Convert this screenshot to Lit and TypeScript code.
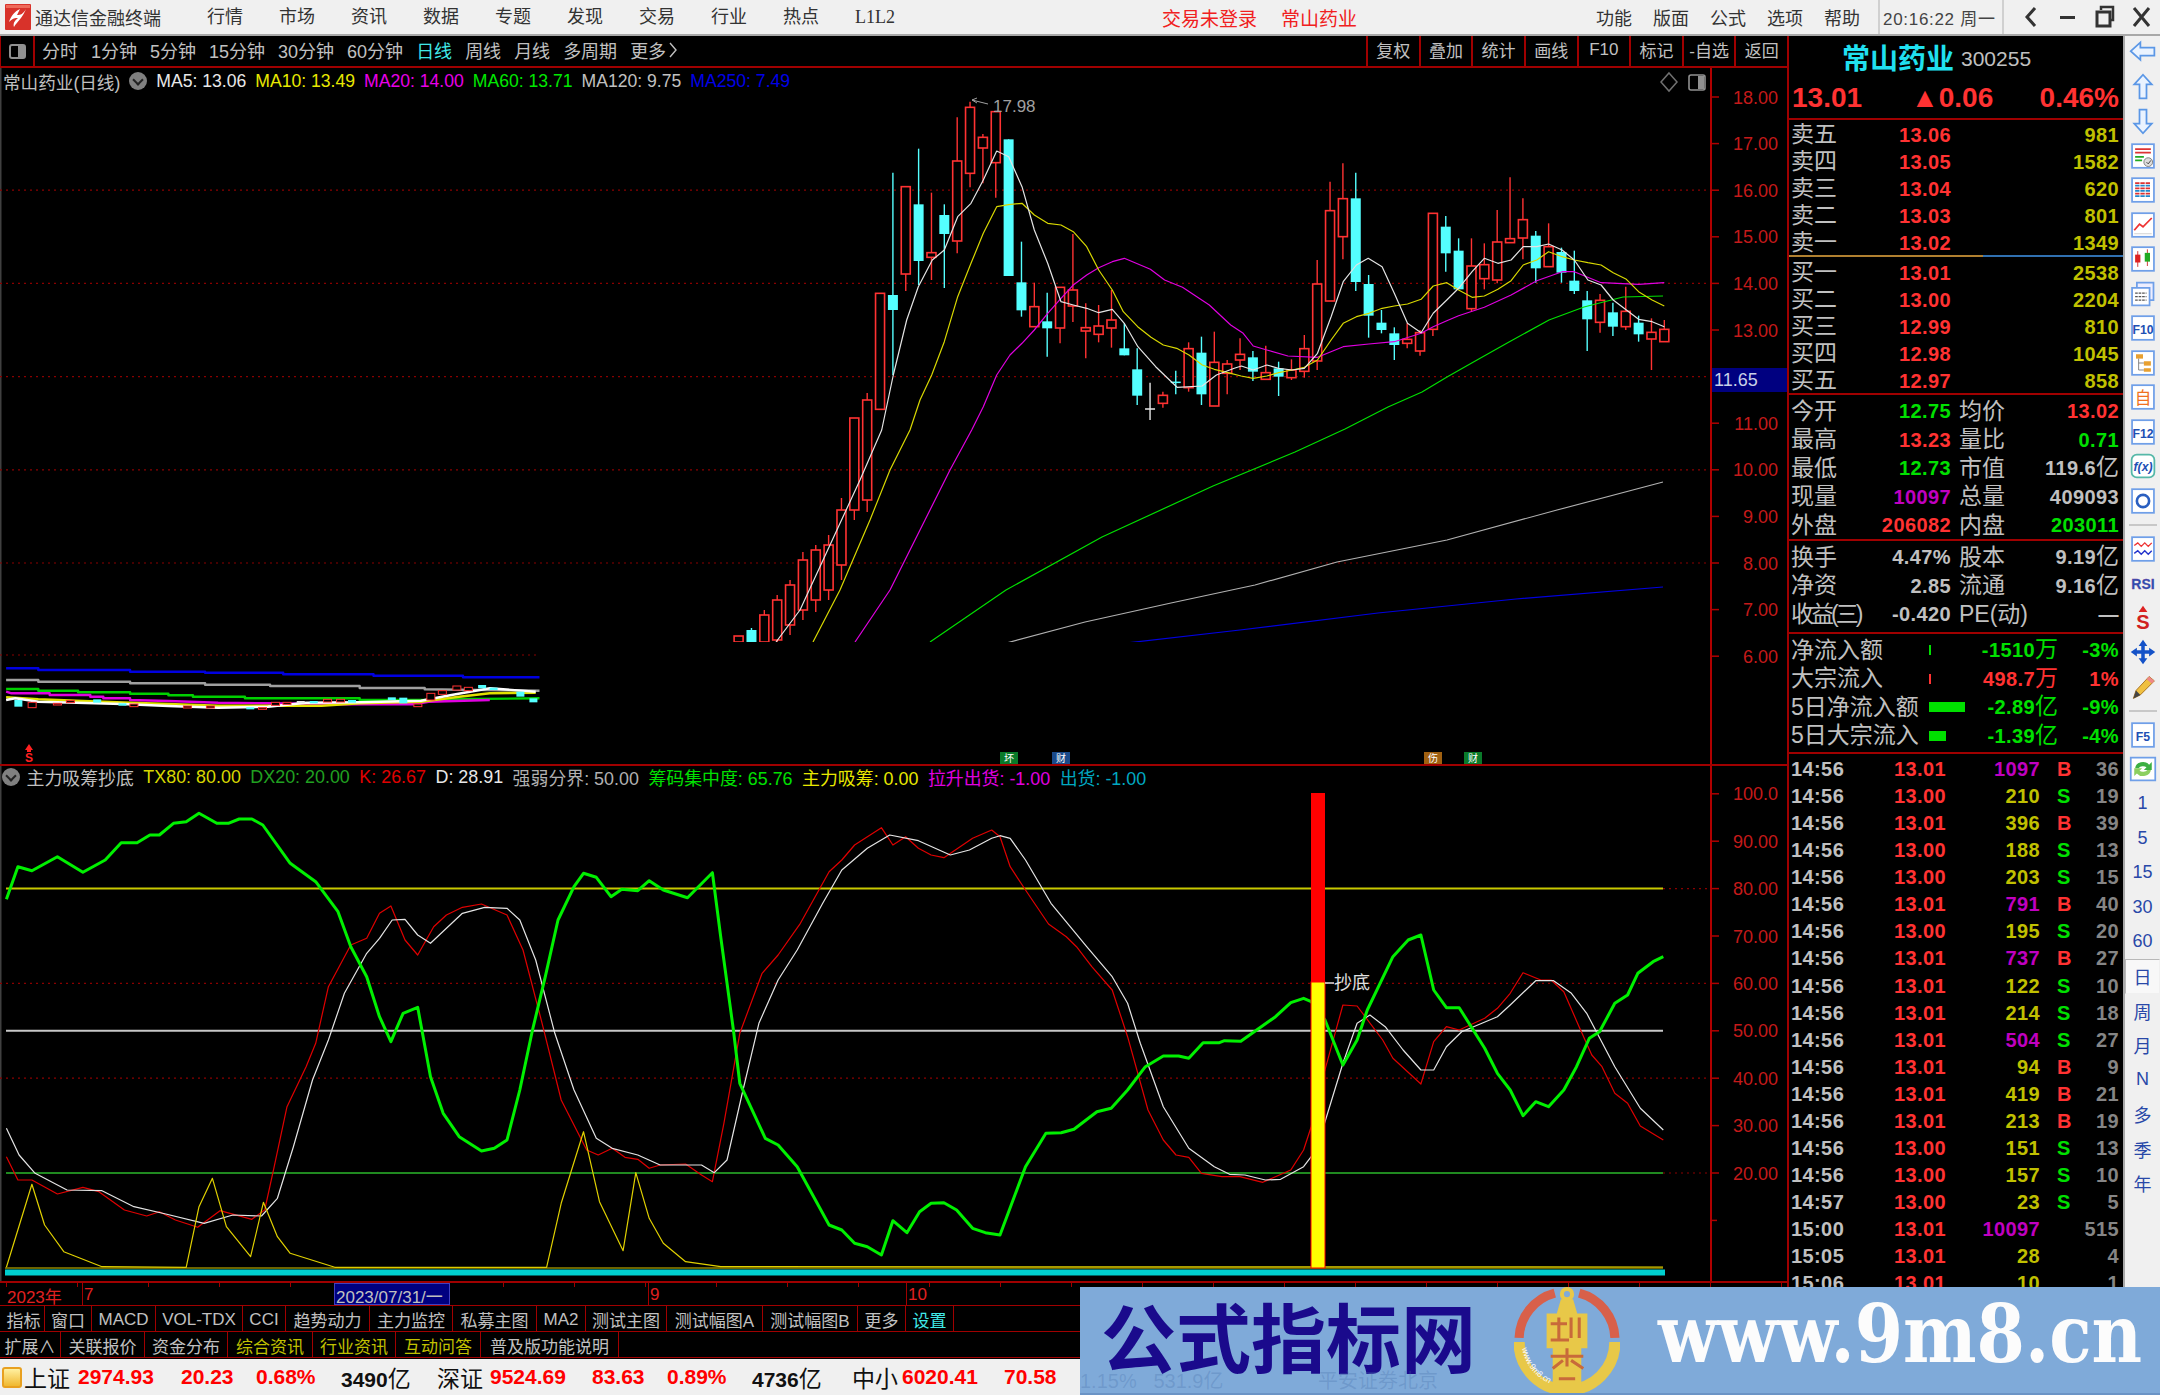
import { LitElement, html, css, svg } from "lit";
import { customElement } from "lit/decorators.js";

type P = [number, number];
const z7 = (a: P[]): P[] => a.map(([x, y]) => [x / 1.3067, 640 + y / 3]);
const z8 = (a: P[]): P[] => a.map(([x, y]) => [700 + x / 3, 90 + y / 3]);
const z9 = (a: P[]): P[] => a.map(([x, y]) => [1120 + x / 2.8, 150 + y / 3]);
const z11 = (a: P[]): P[] => a.map(([x, y]) => [x / 1.568, 790 + y / 3]);
const z12 = (a: P[]): P[] => a.map(([x, y]) => [1000 + x / 1.96, 770 + y / 3]);
const pts = (a: P[]) => a.map(([x, y]) => `${x.toFixed(1)},${y.toFixed(1)}`).join(" ");

// [colour, high, top, bottom, low] in page pixels
type C = ["r" | "c" | "w", number, number, number, number];
const y8 = (c: any, a: number, b: number, d: number, e: number): C => [c, 90 + a / 3, 90 + b / 3, 90 + d / 3, 90 + e / 3];
const y9 = (c: any, a: number, b: number, d: number, e: number): C => [c, 150 + a / 3, 150 + b / 3, 150 + d / 3, 150 + e / 3];
const candles: C[] = [
  ["r", 636, 636, 642, 642], ["c", 628, 630, 642, 642], ["r", 610, 615, 642, 642], ["r", 595, 600, 640, 642],
  ["r", 580, 585, 625, 635], ["r", 552, 560, 610, 620], ["r", 545, 550, 600, 612], ["r", 535, 545, 590, 600], ["r", 498, 510, 565, 580],
  ["r", 418, 418, 510, 520], ["r", 393, 400, 500, 512],
  y8("r", 610, 610, 958, 958), y8("c", 248, 615, 660, 855), y8("r", 290, 290, 552, 603), y8("c", 176, 343, 513, 585),
  y8("r", 308, 488, 502, 570), y8("c", 343, 375, 432, 594), y8("r", 82, 213, 453, 490), y8("r", 35, 52, 250, 292),
  y8("r", 132, 142, 174, 280), y8("r", 65, 65, 218, 323), y8("c", 148, 148, 558, 558), y8("c", 455, 577, 661, 680),
  y8("r", 578, 650, 710, 710), y8("c", 608, 694, 715, 800), y8("r", 592, 592, 714, 760), y8("r", 432, 600, 648, 696),
  y8("r", 640, 713, 723, 805), y8("r", 645, 708, 733, 757), y8("r", 600, 690, 714, 773), y8("c", 700, 775, 796, 796),
  y8("c", 775, 838, 917, 945), y8("w", 878, 957, 957, 990), y8("r", 905, 916, 940, 953), y8("c", 842, 877, 877, 913),
  y8("r", 757, 776, 893, 905), y8("c", 740, 788, 913, 945), y8("r", 725, 817, 948, 948),
  y9("r", 630, 642, 670, 733), y9("r", 565, 613, 630, 660), y9("c", 603, 622, 665, 693), y9("r", 587, 668, 688, 688),
  y9("c", 635, 655, 680, 738), y9("r", 628, 660, 683, 690), y9("r", 555, 596, 664, 683), y9("r", 330, 402, 633, 660),
  y9("r", 95, 182, 453, 453), y9("r", 40, 146, 260, 328), y9("c", 68, 145, 396, 423), y9("c", 375, 402, 497, 563),
  y9("c", 480, 518, 540, 550), y9("c", 532, 550, 585, 630), y9("r", 520, 568, 580, 595), y9("r", 540, 548, 603, 617),
  y9("r", 190, 190, 538, 558), y9("c", 198, 230, 310, 365), y9("c", 265, 302, 418, 418), y9("r", 265, 348, 476, 485),
  y9("r", 280, 344, 386, 418), y9("r", 180, 276, 390, 400), y9("r", 82, 266, 278, 278), y9("r", 145, 209, 264, 328),
  y9("c", 243, 257, 355, 398), y9("r", 220, 290, 350, 350), y9("c", 293, 306, 368, 398), y9("c", 302, 392, 423, 432),
  y9("c", 423, 451, 508, 603), y9("r", 432, 451, 517, 548), y9("c", 458, 487, 530, 558), y9("r", 410, 484, 530, 540),
  y9("c", 497, 518, 553, 575), y9("r", 505, 547, 567, 660), y9("r", 510, 538, 575, 575),
];

const ma5: P[] = [
  [776, 642], [800, 610], [830, 545], [860, 480],
  ...z8([[545, 1020], [580, 855], [620, 690], [655, 590], [697, 510], [733, 480], [773, 380], [813, 340], [850, 270], [890, 183], [926, 200], [966, 290], [1003, 420], [1043, 520], [1083, 635], [1120, 645], [1160, 655], [1196, 668], [1237, 658], [1273, 700]]),
  ...z9([[50, 590], [100, 650], [160, 712], [230, 708], [270, 675], [320, 655], [340, 648], [373, 660], [411, 645], [444, 655], [482, 660], [516, 655], [553, 610], [591, 500], [625, 395], [662, 345], [695, 325], [734, 350], [768, 430], [805, 520], [843, 548], [877, 490], [915, 450], [948, 415], [986, 365], [1020, 325], [1058, 340], [1095, 330], [1129, 290], [1167, 290], [1200, 282], [1238, 300], [1272, 330], [1310, 390], [1347, 405], [1381, 450], [1418, 480], [1452, 508], [1490, 515], [1524, 530]]),
];
const ma10: P[] = [
  [813, 642], [840, 590], [870, 520], [890, 470],
  ...z8([[630, 1020], [660, 930], [695, 855], [733, 755], [773, 620], [813, 520], [850, 430], [890, 350], [926, 344], [966, 340], [1003, 375], [1043, 400], [1083, 405], [1120, 425], [1160, 470], [1196, 540], [1237, 600], [1270, 665], [1313, 710], [1353, 742], [1390, 765], [1430, 775], [1467, 795], [1507, 825], [1543, 838]]),
  ...z9([[302, 668], [339, 678], [373, 685], [411, 678], [444, 668], [482, 660], [516, 652], [553, 630], [591, 570], [625, 520], [662, 500], [697, 490], [734, 475], [768, 468], [805, 462], [843, 448], [877, 408], [915, 398], [948, 420], [986, 442], [1020, 438], [1058, 418], [1095, 392], [1129, 345], [1167, 330], [1200, 305], [1238, 320], [1272, 330], [1310, 338], [1347, 345], [1381, 368], [1418, 388], [1452, 425], [1490, 450], [1524, 468]]),
];
const ma20: P[] = [
  [855, 642], [890, 590], [925, 520], [950, 470],
  ...z8([[815, 1020], [850, 950], [890, 855], [930, 795], [966, 760], [1003, 720], [1043, 670], [1083, 625], [1120, 585], [1160, 555], [1196, 533], [1237, 515], [1273, 505]]),
  ...z9([[85, 358], [125, 390], [175, 412], [250, 465], [310, 525], [345, 550], [373, 588], [411, 600], [470, 618], [553, 622], [625, 590], [697, 582], [768, 575], [843, 550], [877, 530], [915, 512], [948, 497], [1020, 472], [1095, 435], [1167, 392], [1238, 365], [1272, 365], [1347, 398], [1452, 403], [1524, 398]]),
];
const ma60: P[] = [[930, 642], [1006, 590], [1102, 537], [1213, 486], [1295, 452], [1345, 429], [1388, 407], [1422, 392], [1447, 377], [1477, 360], [1509, 342], [1549, 320], [1584, 307], [1623, 297], [1663, 296]];
const ma120: P[] = [[999, 645], [1085, 622], [1171, 603], [1255, 585], [1337, 562], [1447, 540], [1557, 510], [1663, 482]];
const ma250: P[] = [[1109, 645], [1240, 630], [1378, 613], [1516, 599], [1663, 587]];

const mini: { c: string; p: P[] }[] = [
  { c: "#0000e0", p: z7([[8, 85], [50, 85], [50, 90], [170, 90], [170, 95], [268, 95], [268, 98], [370, 98], [370, 103], [488, 103], [488, 107], [605, 107], [605, 112], [705, 112]]) },
  { c: "#a0a0a0", p: z7([[8, 120], [50, 120], [50, 125], [170, 125], [170, 130], [268, 130], [268, 134], [353, 134], [353, 138], [470, 138], [470, 144], [555, 144], [555, 148], [705, 152]]) },
  { c: "#00d000", p: z7([[8, 147], [50, 147], [50, 152], [102, 152], [102, 157], [170, 157], [170, 161], [220, 161], [220, 166], [252, 166], [252, 170], [320, 170], [320, 175], [470, 175], [470, 180], [560, 180], [570, 178], [705, 175]]) },
  { c: "#e000e0", p: z7([[8, 155], [15, 160], [65, 160], [65, 165], [118, 165], [118, 170], [135, 170], [135, 175], [170, 175], [170, 180], [220, 183], [285, 188], [350, 190], [450, 193], [540, 193], [560, 185], [640, 180]]) },
  { c: "#e0e000", p: z7([[8, 172], [50, 178], [100, 182], [170, 188], [220, 192], [285, 197], [420, 197], [470, 190], [550, 185], [600, 170], [640, 160], [700, 158]]) },
  { c: "#ffffff", p: z7([[8, 180], [20, 175], [50, 185], [100, 188], [160, 192], [220, 198], [285, 203], [350, 200], [400, 188], [470, 187], [550, 182], [590, 165], [640, 145], [700, 155]]) },
];
const miniCandles: [number, number, number, string][] = [
  [24, 180, 200, "c"], [42, 187, 203, "r"], [75, 190, 195, "r"], [92, 182, 188, "r"], [127, 178, 188, "c"], [160, 190, 197, "c"], [175, 192, 200, "r"],
  [245, 198, 204, "r"], [275, 198, 204, "r"], [327, 202, 208, "c"], [343, 203, 208, "r"], [360, 187, 196, "r"], [375, 187, 193, "r"], [393, 183, 190, "w"],
  [410, 183, 190, "c"], [428, 178, 186, "r"], [445, 178, 186, "r"], [460, 180, 188, "c"], [512, 172, 180, "c"], [527, 173, 190, "c"], [546, 192, 200, "r"],
  [563, 160, 180, "r"], [578, 152, 163, "r"], [597, 138, 150, "r"], [612, 142, 152, "r"], [630, 135, 145, "c"], [645, 143, 150, "c"], [680, 155, 170, "c"], [697, 175, 187, "c"],
];

const iGreen: P[] = [
  ...z11([[10, 328], [28, 230], [50, 242], [90, 200], [130, 247], [165, 210], [190, 158], [215, 158], [235, 135], [250, 135], [272, 100], [292, 95], [312, 70], [340, 100], [358, 100], [375, 87], [395, 87], [412, 105], [455, 220], [495, 275], [530, 365], [550, 470], [575, 560], [595, 680], [613, 755], [632, 670], [655, 652], [675, 860], [695, 970], [720, 1040], [755, 1083], [775, 1075], [795, 1050], [815, 900], [835, 720], [855, 560], [875, 390], [900, 290], [915, 250], [935, 262], [958, 320], [975, 298], [1000, 302], [1018, 272], [1040, 300], [1078, 323], [1117, 248], [1130, 440], [1150, 720], [1160, 880], [1200, 1045], [1220, 1065], [1250, 1130], [1300, 1305], [1320, 1320], [1340, 1360], [1360, 1370], [1382, 1395], [1400, 1292], [1422, 1328], [1442, 1265], [1460, 1240], [1480, 1238], [1500, 1260], [1525, 1315], [1545, 1328]]),
  ...z12([[0, 1395], [50, 1190], [90, 1090], [120, 1088], [145, 1078], [190, 1025], [218, 1015], [250, 960], [285, 890], [320, 858], [350, 858], [370, 865], [398, 818], [430, 818], [440, 812], [472, 814], [540, 740], [570, 698], [595, 685], [610, 695], [637, 750], [672, 885], [700, 810], [720, 720], [770, 560], [800, 510], [825, 495], [850, 660], [875, 713], [900, 713], [950, 835], [975, 910], [1000, 960], [1025, 1037], [1050, 995], [1075, 1010], [1105, 960], [1130, 890], [1155, 805], [1175, 785], [1205, 700], [1230, 675], [1250, 610], [1280, 575], [1300, 560]]),
];
const iRed: P[] = [
  ...z11([[10, 1100], [28, 1170], [50, 1170], [90, 1212], [130, 1192], [155, 1205], [195, 1260], [230, 1278], [250, 1265], [275, 1290], [310, 1312], [345, 1262], [395, 1288], [415, 1260], [430, 1130], [450, 950], [480, 830], [495, 760], [515, 590], [550, 465], [575, 445], [595, 370], [613, 348], [635, 450], [655, 495], [680, 410], [700, 375], [725, 352], [755, 342], [795, 375], [820, 480], [850, 700], [880, 930], [920, 1080], [938, 1095], [960, 1075], [980, 1102], [1000, 1108], [1018, 1135], [1035, 1125], [1075, 1122], [1100, 1155], [1117, 1175], [1135, 1000], [1160, 730], [1195, 550], [1220, 495], [1255, 400], [1300, 245], [1320, 210], [1340, 165], [1382, 113], [1400, 165], [1420, 140], [1440, 175], [1460, 195], [1480, 203], [1525, 145], [1555, 120]]),
  ...z12([[0, 200], [20, 290], [50, 360], [95, 462], [130, 500], [150, 530], [180, 590], [220, 660], [250, 800], [290, 1020], [320, 1110], [345, 1155], [370, 1162], [395, 1210], [435, 1220], [470, 1220], [515, 1237], [570, 1200], [595, 1140], [610, 1070], [635, 910], [672, 705], [700, 708], [750, 810], [770, 865], [825, 942], [850, 815], [875, 770], [900, 780], [950, 745], [975, 715], [1000, 670], [1025, 608], [1060, 630], [1080, 630], [1105, 665], [1135, 770], [1160, 855], [1180, 890], [1205, 970], [1230, 1000], [1255, 1068], [1300, 1110]]),
];
const iWhite: P[] = [
  ...z11([[10, 1015], [30, 1095], [55, 1150], [105, 1200], [160, 1202], [210, 1250], [260, 1272], [320, 1300], [365, 1275], [410, 1278], [435, 1225], [460, 1070], [490, 870], [515, 750], [540, 610], [575, 490], [595, 445], [615, 390], [635, 388], [655, 435], [675, 460], [725, 370], [760, 352], [795, 355], [815, 390], [840, 510], [870, 730], [900, 900], [935, 1045], [960, 1075], [1000, 1095], [1035, 1125], [1100, 1125], [1120, 1148], [1140, 1110], [1165, 900], [1190, 700], [1220, 570], [1250, 480], [1290, 340], [1320, 240], [1360, 175], [1395, 135], [1440, 152], [1490, 195], [1520, 180], [1555, 145]]),
  ...z12([[0, 197], [20, 205], [50, 270], [100, 400], [170, 530], [220, 620], [250, 700], [275, 820], [320, 1010], [370, 1135], [420, 1190], [450, 1213], [480, 1215], [520, 1230], [550, 1228], [595, 1190], [610, 1160], [635, 1065], [672, 880], [700, 760], [725, 735], [755, 770], [790, 840], [825, 900], [850, 900], [875, 830], [905, 785], [975, 740], [1000, 705], [1050, 632], [1085, 632], [1120, 670], [1150, 730], [1205, 890], [1255, 1015], [1300, 1080]]),
];
const iYellow: P[] = [
  ...z11([[10, 1432], [50, 1183], [70, 1305], [100, 1385], [160, 1430], [292, 1432], [312, 1250], [333, 1165], [355, 1310], [393, 1400], [413, 1237], [435, 1340], [455, 1390], [525, 1432], [857, 1432], [880, 1240], [915, 1025], [940, 1235], [977, 1382], [997, 1148], [1018, 1285], [1040, 1360], [1075, 1415], [1130, 1430]]),
  [1663, 1267],
];

const priceTicks = [18, 17, 16, 15, 14, 13, 12, 11, 10, 9, 8, 7, 6];
const py = (p: number) => 97 + (18 - p) * 46.6;
const iy = (v: number) => 1173 - (v - 20) * 4.74;

const sells = [["卖五", "13.06", "981"], ["卖四", "13.05", "1582"], ["卖三", "13.04", "620"], ["卖二", "13.03", "801"], ["卖一", "13.02", "1349"]];
const buys = [["买一", "13.01", "2538"], ["买二", "13.00", "2204"], ["买三", "12.99", "810"], ["买四", "12.98", "1045"], ["买五", "12.97", "858"]];
const stat1 = [
  ["今开", "12.75", "g", "均价", "13.02", "r"], ["最高", "13.23", "r", "量比", "0.71", "g"], ["最低", "12.73", "g", "市值", "119.6|亿", "n"],
  ["现量", "10097", "p", "总量", "409093", "n"], ["外盘", "206082", "r", "内盘", "203011", "g"],
];
const stat2 = [["换手", "4.47%", "n", "股本", "9.19|亿", "n"], ["净资", "2.85", "n", "流通", "9.16|亿", "n"], ["收益(三)", "-0.420", "n", "PE(动)", "—", "n"]];
const flows = [["净流入额", 2, "-1510|万", "-3%", "g"], ["大宗流入", 2, "498.7|万", "1%", "r"], ["5日净流入额", 36, "-2.89|亿", "-9%", "g"], ["5日大宗流入", 17, "-1.39|亿", "-4%", "g"]];
const ticks: [string, string, string, boolean, string, string][] = [
  ["14:56", "13.01", "1097", true, "B", "36"], ["14:56", "13.00", "210", false, "S", "19"], ["14:56", "13.01", "396", false, "B", "39"], ["14:56", "13.00", "188", false, "S", "13"],
  ["14:56", "13.00", "203", false, "S", "15"], ["14:56", "13.01", "791", true, "B", "40"], ["14:56", "13.00", "195", false, "S", "20"], ["14:56", "13.01", "737", true, "B", "27"],
  ["14:56", "13.01", "122", false, "S", "10"], ["14:56", "13.01", "214", false, "S", "18"], ["14:56", "13.01", "504", true, "S", "27"], ["14:56", "13.01", "94", false, "B", "9"],
  ["14:56", "13.01", "419", false, "B", "21"], ["14:56", "13.01", "213", false, "B", "19"], ["14:56", "13.00", "151", false, "S", "13"], ["14:56", "13.00", "157", false, "S", "10"],
  ["14:57", "13.00", "23", false, "S", "5"], ["15:00", "13.01", "10097", true, "", "515"], ["15:05", "13.01", "28", false, "", "4"], ["15:06", "13.01", "10", false, "", "1"],
];
const tabs1: [string, number, string?][] = [["指标", 42], ["窗口", 47], ["MACD", 64], ["VOL-TDX", 87], ["CCI", 43], ["趋势动力", 84], ["主力监控", 83], ["私募主图", 84], ["MA2", 49], ["测试主图", 81], ["测试幅图A", 96], ["测试幅图B", 95], ["更多", 48], ["设置", 48, "cy"]];
const tabs2: [string, number, string?][] = [["扩展∧", 61], ["关联报价", 84], ["资金分布", 83], ["综合资讯", 85, "ye"], ["行业资讯", 83, "ye"], ["互动问答", 85, "ye"], ["普及版功能说明", 138]];
const status: [string, number, string][] = [
  ["上证", 54, "k"], ["2974.93", 103, "r"], ["20.23", 75, "r"], ["0.68%", 85, "r"], ["3490|亿", 96, "b"], ["深证", 53, "k"], ["9524.69", 102, "r"], ["83.63", 75, "r"], ["0.89%", 85, "r"], ["4736|亿", 100, "b"], ["中小", 50, "k"], ["6020.41", 102, "r"], ["70.58", 76, "r"],
];

const box = (c: unknown) => svg`<rect x="3.5" y="2.5" width="25" height="27" fill="#fff" stroke="#6f9fe8" stroke-width="2"/>${c}`;
const icons: unknown[] = [
  svg`<path d="M2 15 L13 5 V11 H29 V20 H13 V25 Z" fill="#eaf3ff" stroke="#5b97e6" stroke-width="2"/>`,
  svg`<path d="M16 2 L26 13 H20 V29 H12 V13 H6 Z" fill="#eaf3ff" stroke="#5b97e6" stroke-width="2"/>`,
  svg`<path d="M16 30 L26 19 H20 V3 H12 V19 H6 Z" fill="#eaf3ff" stroke="#5b97e6" stroke-width="2"/>`,
  box(svg`<path d="M7 8H25M7 12H25" stroke="#d33" stroke-width="2"/><path d="M7 17H17M7 21H15" stroke="#2a2" stroke-width="2"/><circle cx="22" cy="23" r="5" fill="#ddd" stroke="#777"/><path d="M20 23l2 2 3-4" fill="none" stroke="#333"/>`),
  box(svg`<path d="M7 8H25M7 14H25M7 20H25" stroke="#d33" stroke-width="2" stroke-dasharray="5 1"/><path d="M7 11H25M7 17H25M7 23H25" stroke="#28c" stroke-width="2" stroke-dasharray="5 1"/>`),
  box(svg`<path d="M6 22 L12 15 L16 18 L26 8" fill="none" stroke="#e33" stroke-width="2"/><path d="M6 26H26" stroke="#ccc"/>`),
  box(svg`<path d="M10 7V25M21 5V24" stroke="#c22"/><rect x="7" y="11" width="6" height="9" fill="#d22"/><rect x="18" y="9" width="6" height="10" fill="#2a2"/>`),
  svg`<rect x="9" y="3" width="19" height="20" fill="#eef" stroke="#6f9fe8" stroke-width="2"/><rect x="3.5" y="9" width="20" height="20" fill="#fff" stroke="#6f9fe8" stroke-width="2"/><path d="M7 15H20M7 19H20M7 23H20" stroke="#555" stroke-width="1.5" stroke-dasharray="3 1"/>`,
  box(svg`<text x="16" y="23" text-anchor="middle" class="ict">F10</text>`),
  box(svg`<rect x="8" y="6" width="8" height="5" fill="#e8a030"/><rect x="17" y="14" width="8" height="5" fill="#e8a030"/><rect x="17" y="22" width="8" height="4" fill="#e8a030"/><path d="M11 11V24H17M11 16H17" fill="none" stroke="#777"/>`),
  box(svg`<text x="16" y="24" text-anchor="middle" class="icz" fill="#f07020">自</text>`),
  box(svg`<text x="16" y="23" text-anchor="middle" class="ict">F12</text>`),
  svg`<rect x="3" y="3" width="26" height="26" rx="6" fill="#fff" stroke="#55b8a8" stroke-width="2"/><text x="16" y="22" text-anchor="middle" class="ict" font-style="italic">f(x)</text>`,
  box(svg`<circle cx="16" cy="16" r="7" fill="none" stroke="#2a5fc0" stroke-width="3"/>`),
  box(svg`<path d="M6 12 L10 9 L14 13 L18 9 L22 13 L26 9" fill="none" stroke="#e33" stroke-width="1.6"/><path d="M6 21 L10 18 L14 22 L18 18 L22 22 L26 18" fill="none" stroke="#23c" stroke-width="1.6"/>`),
  svg`<text x="16" y="23" text-anchor="middle" class="rsi">RSI</text>`,
  svg`<path d="M16 2 L21 9 H11 Z" fill="#d22"/><text x="16" y="29" text-anchor="middle" class="dollar">S</text>`,
  svg`<path d="M16 2 L21 9 H18 V14 H23 V11 L30 16 L23 21 V18 H18 V23 H21 L16 30 L11 23 H14 V18 H9 V21 L2 16 L9 11 V14 H14 V9 H11 Z" fill="#1452c8"/>`,
  svg`<path d="M5 29 L8 20 L23 4 L29 9 L13 25 Z" fill="#f0c040" stroke="#a06818"/><path d="M23 4 L29 9 L26 12 L20 7Z" fill="#e88"/><path d="M5 29 L8 20 L13 25Z" fill="#444"/>`,
  box(svg`<text x="16" y="23" text-anchor="middle" class="ict">F5</text>`),
  svg`<rect x="2" y="3" width="28" height="26" fill="#fff" stroke="#6f9fe8" stroke-width="2"/><path d="M7 15 A9 8 0 0 1 23 11 L26 8 V17 H17 L20 14 A6 5 0 0 0 11 15 Z" fill="#3cb043"/><path d="M25 17 A9 8 0 0 1 9 21 L6 24 V15 H15 L12 18 A6 5 0 0 0 21 17 Z" fill="#8ccf60"/>`,
];

@customElement("app-root")
export class AppRoot extends LitElement {
  static styles = css`
    :host { display: block; width: 2160px; height: 1395px; overflow: hidden; background: #000; }
    * { box-sizing: border-box; }
    .app { position: relative; width: 2160px; height: 1395px; display: flex; flex-direction: column; overflow: hidden;
      font-family: "Liberation Sans", "Noto Sans CJK SC", sans-serif; font-size: 17px; color: #c0c0c0; background: #000; }

    /* title bar */
    .title { height: 36px; flex: none; display: flex; align-items: center; background: #f0f0f0; border-bottom: 2px solid #a8a8a8; color: #333; font-size: 18px; }
    .logo { width: 26px; height: 26px; margin-left: 5px; margin-right: 4px; flex: none; }
    .apptitle { width: 126px; white-space: nowrap; }
    .menu { display: flex; gap: 36px; margin-left: 46px; align-items: center; }
    .menu span { width: 36px; white-space: nowrap; line-height: 24px; }
    .menu .l { font-family: "Liberation Serif", serif; }
    .alert { color: #f02020; font-size: 19px; display: flex; gap: 24px; margin-left: 271px; }
    .tright { margin-left: auto; width: 564px; display: flex; align-items: center; height: 100%; }
    .tright .rm { display: flex; gap: 21px; width: 282px; }
    .tright .rm span { width: 36px; white-space: nowrap; }
    .clock { width: 126px; height: 100%; border-left: 2px solid #d0d0d0; border-right: 2px solid #d0d0d0; padding-left: 3px; display: flex; align-items: center; font-size: 17px; white-space: nowrap; letter-spacing: .7px; color: #444; }
    .wbtns { display: flex; padding-left: 8px; }
    .wbtns svg { width: 37px; height: 26px; display: block; }

    /* main */
    .main { flex: none; height: 1323px; display: flex; overflow: hidden; }
    .left { width: 1787px; flex: none; display: flex; flex-direction: column; }
    .tool { height: 32px; flex: none; display: flex; align-items: stretch; border-bottom: 2px solid #a00000; }
    .tcell { width: 35px; flex: none; border-right: 2px solid #a00000; border-left: 1px solid #a00000; display: flex; align-items: center; justify-content: center; }
    .tcell i { display: block; width: 17px; height: 15px; border: 2px solid #909090; border-radius: 3px; background: linear-gradient(90deg, transparent 55%, #909090 55%); }
    .ptabs { display: flex; gap: 13px; margin-left: 7px; align-items: center; font-size: 18px; white-space: nowrap; padding-bottom: 3px; }
    .ptabs .on { color: #40e8e8; }
    .ptabs .more { display: flex; align-items: center; gap: 3px; }
    .ptabs .more svg { width: 8px; height: 16px; display: block; }
    .rtabs { margin-left: auto; display: flex; width: 421px; }
    .rtabs span { flex: 1; border-left: 2px solid #a00000; display: flex; align-items: center; justify-content: center; white-space: nowrap; padding-bottom: 3px; }

    .pane { position: relative; flex: none; }
    .pane svg.chart { display: block; }
    .price { height: 696px; }
    .indi { height: 517px; border-top: 2px solid #a00000; }
    .legend { position: absolute; left: 3px; top: 1px; height: 24px; display: flex; align-items: center; white-space: nowrap; gap: 9px; font-size: 17.6px; }
    .indi .legend { top: -1px; height: 24px; left: 2px; gap: 9.5px; font-size: 17.9px; }
    .indi .legend .dot { margin-right: -3px; }
    .dot { width: 18px; height: 18px; border-radius: 50%; background: #808080; position: relative; flex: none; }
    .dot::after { content: ""; position: absolute; left: 5px; top: 4px; width: 6px; height: 6px; border: solid #222; border-width: 0 2px 2px 0; transform: rotate(45deg); }

    text.ax { font-size: 18px; fill: #c41a1a; text-anchor: end; }
    text.hi { font-size: 17px; fill: #a0a0a0; }
    text.lab { font-size: 18px; fill: #e0e0e0; }
    text.bdg { font-size: 10px; fill: #fff; text-anchor: middle; }

    .dates { height: 24px; flex: none; display: flex; border-top: 2px solid #a00000; color: #e02020; font-size: 17px;
      background: repeating-linear-gradient(90deg, #a00000 0 1px, transparent 1px 71px) 6px 0 / 100% 4px no-repeat; }
    .dates span { border-left: 1px solid #a00000; padding: 2px 0 0 1px; display: flex; align-items: center; white-space: nowrap; flex: none; }
    .dates .y { border-left: 0; padding-left: 7px; }
    .dates .d { background: #000080; color: #c0c0c0; border: 1px solid #4040c0; }
    .trow { height: 26px; flex: none; display: flex; border-top: 1px solid #a00000; padding-left: 3px; }
    .trow span { flex: none; border-right: 1px solid #a00000; display: flex; align-items: center; justify-content: center; white-space: nowrap; padding-top: 2px; }
    .trow.b { height: 27px; padding-left: 0; border-bottom: 1px solid #a00000; }
    .cy { color: #40e8e8; }
    .ye { color: #c0c000; }

    /* quote panel */
    .quote { width: 336px; flex: none; border-left: 2px solid #a00000; display: flex; flex-direction: column; overflow: hidden; }
    .name { height: 42px; flex: none; display: flex; align-items: center; padding-left: 53px; gap: 7px; }
    .name b { font-size: 28px; font-weight: 700; color: #20e0f0; }
    .name span { font-size: 21px; color: #c0c0c0; padding-top: 4px; }
    .last { height: 42px; flex: none; display: grid; grid-template-columns: 119px 118px 1fr; align-items: center; padding: 0 4px 0 3px; font-size: 28px; font-weight: 700; color: #ff3232; border-bottom: 2px solid #a00000; }
    .last span:last-child { text-align: right; }
    .lv { display: grid; grid-template-columns: 108px 1fr auto; height: 27px; align-items: center; padding: 0 4px 0 2px; }
    .cn { font-size: 23px; color: #c0c0c0; white-space: nowrap; line-height: 27px; }
    .cn.tight { letter-spacing: -3px; }
    .num { font-size: 20px; font-weight: 700; letter-spacing: .4px; white-space: nowrap; line-height: 24px; }
    .num small { font-size: 23px; font-weight: 400; letter-spacing: 0; line-height: 0; }
    .r { color: #ff3232; } .g { color: #00e000; } .p { color: #c000c0; } .n { color: #c0c0c0; } .v { color: #c0c000; } .dim { color: #858585; }
    .sep { height: 2px; flex: none; background: linear-gradient(90deg, #b08030 0 194px, #3070b0 194px); margin: 0; }
    .sells { height: 135px; flex: none; padding-top: 1px; }
    .buys { height: 138px; flex: none; padding-top: 2px; border-bottom: 2px solid #a00000; }
    .stat { flex: none; border-bottom: 2px solid #a00000; padding: 2px 4px 0 2px; }
    .kv { display: grid; grid-template-columns: 60px 100px 8px 60px 100px; height: 28.5px; align-items: center; }
    .kv .num { justify-self: end; }
    .kv .l2 { grid-column: 4; }
    .s1 { height: 146px; } .s2 { height: 93px; }
    .s3 { height: 120px; margin-bottom: 1.5px; }
    .fl { display: grid; grid-template-columns: 138px 60px 69px 61px; height: 28.5px; align-items: center; }
    .fl .num { justify-self: end; }
    .fl .bar { height: 10px; display: block; }
    .tk { display: grid; grid-template-columns: 103px 60px 86px 17px 16px 46px; height: 27.07px; align-items: center; padding: 0 0 0 2px; }
    .tk .v1, .tk .c { justify-self: end; }

    /* right strip */
    .strip { width: 37px; flex: none; background: #f0f0f0; border-left: 2px solid #a8a8a8; display: flex; flex-direction: column; align-items: center; margin-top: -1px; }
    .si { height: 34.5px; width: 100%; flex: none; display: flex; align-items: center; justify-content: center; }
    .si svg { width: 28px; height: 28px; }
    .ssep { height: 13.5px; width: 28px; flex: none; display: flex; align-items: center; }
    .ssep::before { content: ""; display: block; width: 100%; height: 2px; background: #c8c8c8; }
    .st { font-size: 18px; color: #2848a8; }
    .st.on { background: #f8f8f8; border: 1px solid; border-color: #b8b8b8 #f0f0f0 #f0f0f0 #b8b8b8; }
    text.ict { font-size: 14px; font-weight: 700; fill: #1e50b4; font-family: "Liberation Sans", sans-serif; }
    text.icz { font-size: 19px; font-family: "Noto Sans CJK SC", sans-serif; }
    text.rsi { font-size: 16px; font-weight: 700; fill: #2a4fb0; stroke: #7a3fa0; stroke-width: .3px; }
    text.dollar { font-size: 23px; font-weight: 700; fill: #d02020; }

    /* status */
    .status { height: 36px; flex: none; background: #f0f0f0; display: flex; align-items: center; padding-left: 2px; color: #111; }
    .status i { display: block; width: 20px; height: 21px; margin-right: 2px; border: 2px solid #e8a020; border-radius: 3px; background: linear-gradient(180deg, #fff0a0, #f0b830); flex: none; }
    .status span { flex: none; white-space: nowrap; }
    .status .k { font-size: 23px; }
    .status .rd { font-size: 21px; font-weight: 700; color: #ff0000; }
    .status .bk { font-size: 21px; font-weight: 700; color: #111; }
    .status .bk small { font-size: 23px; font-weight: 400; }

    /* watermark banner */
    .wm { position: absolute; left: 1080px; top: 1287px; width: 1080px; height: 108px; background: #7faad9; border-bottom: 2px solid #6b94c6; display: flex; align-items: center; overflow: hidden; }
    .wm .tx { font-family: "Noto Sans CJK SC", sans-serif; font-weight: 700; font-size: 75px; line-height: 98px; height: 108px; color: #1a0a8c; margin-left: 21px; width: 413px; white-space: nowrap; flex: none; }
    .wm .lg { width: 106px; height: 106px; flex: none; display: block; }
    .wm .url { width: 500px; height: 108px; margin-left: 30px; flex: none; display: block; }
    .wm .url text { font-family: "DejaVu Serif", serif; font-weight: 700; font-size: 80px; fill: #fcfcfc; }
    .ghost { position: absolute; left: 0; top: 78px; font-size: 20px; color: rgba(70, 110, 170, .28); white-space: pre; }
  `;

  private candleSvg() {
    const step = 90 / 7;
    return candles.map(([c, hi, top, bot, lo], i) => {
      const x = 854.33 + (i - 9) * step;
      const col = c === "r" ? "#ff3232" : c === "c" ? "#54ffff" : "#e8e8e8";
      const body = top === bot
        ? svg`<line x1=${x - 5} x2=${x + 5} y1=${top} y2=${top} stroke=${col} stroke-width="1.5"/>`
        : c === "r"
          ? svg`<rect x=${x - 4.5} y=${top} width="9" height=${bot - top} fill="#000" stroke=${col} stroke-width="1.6"/>`
          : svg`<rect x=${x - 5} y=${top} width="10" height=${bot - top} fill=${col}/>`;
      return svg`<line x1=${x} x2=${x} y1=${hi} y2=${lo} stroke=${col} stroke-width="1.4"/>${body}`;
    });
  }

  private priceChart() {
    const line = (p: P[], c: string, w = 1.2) => svg`<polyline points=${pts(p)} fill="none" stroke=${c} stroke-width=${w} stroke-linejoin="round"/>`;
    return svg`
      <svg class="chart" width="1787" height="696" viewBox="0 68 1787 696">
        <defs><clipPath id="pc"><rect x="0" y="68" width="1711" height="574"/></clipPath></defs>
        <rect x="0" y="68" width="1.5" height="696" fill="#404040"/>
        ${[16, 14, 12, 10, 8].map((p) => svg`<line x1="0" x2="1711" y1=${py(p)} y2=${py(p)} stroke="#8a0000" stroke-width="1.2" stroke-dasharray="2 4"/>`)}
        <line x1="0" x2="540" y1="655" y2="655" stroke="#8a0000" stroke-width="1.2" stroke-dasharray="2 4"/>
        <g clip-path="url(#pc)">
          ${this.candleSvg()}
          ${line(ma250, "#0000e0")}${line(ma120, "#b0b0b0")}${line(ma60, "#00e000")}${line(ma20, "#e000e0")}${line(ma10, "#d8d800")}${line(ma5, "#e4e4e4")}
        </g>
        <path d="M972 100 L988 104 M972 100 l5 -2 M972 100 l5 3" stroke="#a0a0a0" fill="none"/>
        <text class="hi" x="993" y="112">17.98</text>
        <path d="M1669 73 L1677 82 L1669 91 L1661 82 Z" fill="none" stroke="#707070" stroke-width="1.5"/>
        <rect x="1689" y="75" width="16" height="15" rx="2" fill="none" stroke="#909090" stroke-width="1.6"/><rect x="1698" y="76" width="6" height="13" fill="#909090"/>
        ${mini.map((m) => line(m.p, m.c, 2.4))}
        ${miniCandles.map(([zx, t, b, c]) => {
          const col = c === "r" ? "#ff3232" : c === "c" ? "#54ffff" : "#e8e8e8";
          return svg`<rect x=${zx / 1.3067 - 4} y=${640 + t / 3} width="8" height=${(b - t) / 3} fill=${c === "r" ? "#000" : col} stroke=${c === "r" ? col : "none"} stroke-width="1"/>`;
        })}
        <path d="M29 744 L33 750 H31 V752 H27 V750 H25 Z" fill="#ff2020"/>
        <text x="29" y="762" font-size="12" font-weight="700" fill="#ff2020" text-anchor="middle">S</text>
        <rect x="1000" y="752" width="18" height="12" fill="#0a7a2a"/><text class="bdg" x="1009" y="762">坏</text>
        <rect x="1052" y="752" width="18" height="12" fill="#1a4a8a"/><text class="bdg" x="1061" y="762">财</text>
        <rect x="1424" y="752" width="18" height="12" fill="#a06010"/><text class="bdg" x="1433" y="762">伤</text>
        <rect x="1464" y="752" width="18" height="12" fill="#0a7a2a"/><text class="bdg" x="1473" y="762">财</text>
        <line x1="1711" x2="1711" y1="68" y2="764" stroke="#b00000" stroke-width="2"/>
        ${priceTicks.map((p) => svg`<line x1="1711" x2="1719" y1=${py(p)} y2=${py(p)} stroke="#b00000" stroke-width="1.5"/>`)}
        ${priceTicks.filter((p) => p !== 12).map((p) => svg`<text class="ax" x="1778" y=${py(p) + 6.5}>${p.toFixed(2)}</text>`)}
        <rect x="1712" y="368" width="75" height="24" fill="#000080"/>
        <text x="1714" y="386" font-size="18" fill="#c8d0e8">11.65</text>
      </svg>`;
  }

  private indiChart() {
    const line = (p: P[], c: string, w = 1.2) => svg`<polyline points=${pts(p)} fill="none" stroke=${c} stroke-width=${w} stroke-linejoin="round"/>`;
    const vals = [100, 90, 80, 70, 60, 50, 40, 30, 20];
    return svg`
      <svg class="chart" width="1787" height="515" viewBox="0 766 1787 515">
        <rect x="0" y="766" width="1.5" height="515" fill="#404040"/>
        ${[60, 40].map((v) => svg`<line x1="0" x2="1711" y1=${iy(v)} y2=${iy(v)} stroke="#8a0000" stroke-width="1.2" stroke-dasharray="2 4"/>`)}
        ${[80, 20].map((v) => svg`<line x1="1663" x2="1711" y1=${iy(v)} y2=${iy(v)} stroke="#8a0000" stroke-width="1.2" stroke-dasharray="2 4"/>`)}
        <line x1="6" x2="1663" y1=${iy(80)} y2=${iy(80)} stroke="#c8c800" stroke-width="2"/>
        <line x1="6" x2="1663" y1=${iy(50)} y2=${iy(50)} stroke="#c8c8c8" stroke-width="2"/>
        <line x1="6" x2="1663" y1=${iy(20)} y2=${iy(20)} stroke="#208a20" stroke-width="2"/>
        ${line(iRed, "#e00000")}
        ${line(iWhite, "#e4e4e4")}
        ${line(iYellow, "#e0d000")}
        ${line(iGreen, "#00f000", 3)}
        <rect x="5" y="1269.5" width="1660" height="6" fill="#00d0d0"/>
        <line x1="5" x2="1663" y1="1268" y2="1268" stroke="#d8c800" stroke-width="1.2"/>
        <rect x="1311" y="793" width="14" height="189" fill="#ff0000"/>
        <rect x="1311" y="982" width="14" height="286" fill="#ffff00" stroke="#ff0000" stroke-width="1"/>
        <line x1="1325" x2="1334" y1="983" y2="983" stroke="#e0e0e0" stroke-width="1.5"/>
        <text class="lab" x="1334" y="989">抄底</text>
        <line x1="1711" x2="1711" y1="766" y2="1281" stroke="#b00000" stroke-width="2"/>
        ${vals.map((v) => svg`<line x1="1711" x2="1719" y1=${iy(v)} y2=${iy(v)} stroke="#b00000" stroke-width="1.5"/><text class="ax" x="1778" y=${iy(v) + 6.5}>${v === 100 ? "100.0" : v.toFixed(2)}</text>`)}
        <line x1="1711" x2="1717" y1=${iy(10)} y2=${iy(10)} stroke="#b00000" stroke-width="1.5"/>
      </svg>`;
  }

  private valText(s: string) {
    const [a, b] = s.split("|");
    return b ? html`${a}<small>${b}</small>` : a;
  }

  render() {
    const cols: Record<string, string> = { g: "g", r: "r", p: "p", n: "n" };
    return html`<div class="app">
      <header class="title">
        <svg class="logo" viewBox="0 0 26 26"><rect width="26" height="26" rx="1" fill="#d8322a"/><rect x="1" y="1" width="24" height="3" fill="#ee6a5a"/><path d="M21 5 C18 10 16 11 12 11 L15 5 C10 7 6 12 4 18 C8 14 10 14 13 14 C9 17 8 20 9 23 C12 18 18 13 21 5Z" fill="#fff"/></svg>
        <span class="apptitle">通达信金融终端</span>
        <div class="menu">${["行情", "市场", "资讯", "数据", "专题", "发现", "交易", "行业", "热点"].map((m) => html`<span>${m}</span>`)}<span class="l">L1L2</span></div>
        <div class="alert"><span>交易未登录</span><span>常山药业</span></div>
        <div class="tright">
          <div class="rm">${["功能", "版面", "公式", "选项", "帮助"].map((m) => html`<span>${m}</span>`)}</div>
          <div class="clock">20:16:22 周一</div>
          <div class="wbtns">
            <svg viewBox="0 0 37 26"><path d="M23 4 L15 13 L23 22" fill="none" stroke="#333" stroke-width="3"/></svg>
            <svg viewBox="0 0 37 26"><rect x="11" y="12" width="15" height="3" fill="#333"/></svg>
            <svg viewBox="0 0 37 26"><rect x="11" y="8" width="13" height="14" fill="none" stroke="#333" stroke-width="3"/><path d="M15 6 V3 H27 V16 H25" fill="none" stroke="#333" stroke-width="2.5"/></svg>
            <svg viewBox="0 0 37 26"><path d="M11 4 L26 22 M26 4 L11 22" stroke="#333" stroke-width="3"/></svg>
          </div>
        </div>
      </header>

      <div class="main">
        <div class="left">
          <div class="tool">
            <div class="tcell"><i></i></div>
            <div class="ptabs">
              ${["分时", "1分钟", "5分钟", "15分钟", "30分钟", "60分钟"].map((t) => html`<span>${t}</span>`)}
              <span class="on">日线</span>
              ${["周线", "月线", "多周期"].map((t) => html`<span>${t}</span>`)}
              <span class="more">更多<svg viewBox="0 0 8 16"><path d="M1 1 L7 8 L1 15" fill="none" stroke="#c0c0c0" stroke-width="1.4"/></svg></span>
            </div>
            <div class="rtabs">${["复权", "叠加", "统计", "画线", "F10", "标记", "-自选", "返回"].map((t) => html`<span>${t}</span>`)}</div>
          </div>

          <div class="pane price">
            ${this.priceChart()}
            <div class="legend">
              <span>常山药业(日线)</span><span class="dot"></span>
              <span style="color:#e8e8e8">MA5: 13.06</span><span style="color:#e8e800">MA10: 13.49</span><span style="color:#e800e8">MA20: 14.00</span>
              <span style="color:#00e800">MA60: 13.71</span><span style="color:#c0c0c0">MA120: 9.75</span><span style="color:#0000e8">MA250: 7.49</span>
            </div>
          </div>

          <div class="pane indi">
            ${this.indiChart()}
            <div class="legend">
              <span class="dot"></span><span>主力吸筹抄底</span>
              <span style="color:#d8d800">TX80: 80.00</span><span style="color:#20a020">DX20: 20.00</span><span style="color:#e00000">K: 26.67</span>
              <span style="color:#e8e8e8">D: 28.91</span><span style="color:#b0b0b0">强弱分界: 50.00</span><span style="color:#00e000">筹码集中度: 65.76</span>
              <span style="color:#e8e800">主力吸筹: 0.00</span><span style="color:#e000e0">拉升出货: -1.00</span><span style="color:#00a8c0">出货: -1.00</span>
            </div>
          </div>

          <div class="dates">
            <span class="y" style="width:82px">2023年</span>
            <span style="width:252px">7</span>
            <span class="d" style="width:116px">2023/07/31/一</span>
            <span style="width:198px;border-left:0"></span>
            <span style="width:258px">9</span>
            <span style="width:150px">10</span>
          </div>
          <div class="trow">${tabs1.map(([t, w, c]) => html`<span class=${c ?? ""} style="width:${w}px">${t}</span>`)}</div>
          <div class="trow b">${tabs2.map(([t, w, c]) => html`<span class=${c ?? ""} style="width:${w}px">${t}</span>`)}</div>
        </div>

        <aside class="quote">
          <div class="name"><b>常山药业</b><span>300255</span></div>
          <div class="last"><span>13.01</span><span>▲0.06</span><span>0.46%</span></div>
          <div class="sells">${sells.map(([a, b, c]) => html`<div class="lv"><span class="cn">${a}</span><span class="num r">${b}</span><span class="num v">${c}</span></div>`)}</div>
          <div class="sep"></div>
          <div class="buys">${buys.map(([a, b, c]) => html`<div class="lv"><span class="cn">${a}</span><span class="num r">${b}</span><span class="num v">${c}</span></div>`)}</div>
          <div class="stat s1">${stat1.map((r) => html`<div class="kv"><span class="cn">${r[0]}</span><span class="num ${cols[r[2]]}">${this.valText(r[1])}</span><span class="cn l2">${r[3]}</span><span class="num ${cols[r[5]]}">${this.valText(r[4])}</span></div>`)}</div>
          <div class="stat s2">${stat2.map((r) => html`<div class="kv"><span class="cn ${r[0].includes("收益") ? "tight" : ""}">${r[0]}</span><span class="num ${cols[r[2]]}">${this.valText(r[1])}</span><span class="cn l2">${r[3]}</span><span class="num ${cols[r[5]]}">${this.valText(r[4])}</span></div>`)}</div>
          <div class="stat s3">${flows.map((r) => html`<div class="fl"><span class="cn">${r[0]}</span><span><i class="bar" style="width:${r[1]}px;background:${r[4] === "r" ? "#ff3232" : "#00e000"}"></i></span><span class="num ${cols[r[4] as string]}">${this.valText(r[2] as string)}</span><span class="num ${cols[r[4] as string]}">${r[3]}</span></div>`)}</div>
          ${ticks.map(([t, p, v, big, bs, c]) => html`<div class="tk"><span class="num n">${t}</span><span class="num r">${p}</span><span class="num v1 ${big ? "p" : "v"}">${v}</span><span></span><span class="num ${bs === "B" ? "r" : "g"}">${bs}</span><span class="num c dim">${c}</span></div>`)}
        </aside>

        <nav class="strip">
          ${icons.map((ic, i) => html`
            ${i === 14 || i === 19 ? html`<div class="ssep"></div>` : ""}
            <div class="si"><svg viewBox="0 0 32 32">${ic}</svg></div>`)}
          ${["1", "5", "15", "30", "60", "日", "周", "月", "N", "多", "季", "年"].map((t) => html`<div class="si st ${t === "日" ? "on" : ""}">${t}</div>`)}
        </nav>
      </div>

      <footer class="status">
        <i></i>
        ${status.map(([t, w, c]) => html`<span class=${c === "k" ? "k" : c === "r" ? "rd" : "bk"} style="width:${w}px">${this.valText(t)}</span>`)}
      </footer>

      <div class="wm">
        <div class="ghost">1.15%   531.9亿                 平安证券北京</div>
        <span class="tx">公式指标网</span>
        <svg class="lg" viewBox="0 0 104 104">
          <defs><path id="ring" d="M8 60 A46 46 0 0 0 48 98"/></defs>
          <path d="M5 50 A47 47 0 0 1 40 6" fill="none" stroke="#d8604a" stroke-width="9"/>
          <path d="M99 50 A47 47 0 0 0 64 6" fill="none" stroke="#d8604a" stroke-width="9"/>
          <path d="M99 54 A47 47 0 0 1 52 101 A47 47 0 0 1 5 54" fill="none" stroke="#e8c848" stroke-width="11"/>
          <text font-size="8" fill="#fff" font-family="Liberation Sans, sans-serif"><textPath href="#ring">www.9m8.cn</textPath></text>
          <circle cx="52" cy="7" r="5" fill="none" stroke="#e8c848" stroke-width="4"/>
          <path d="M46 12 H58 L62 26 H72 V60 H66 V98 H38 V60 H32 V26 H42 Z" fill="#e8c848"/>
          <path d="M36 36 H52 M44 30 V52 M36 52 H54 M56 30 V50 M64 30 V50 M36 68 H68 M52 60 V78 M38 80 L48 72 M68 80 L56 72 M44 90 H60" stroke="#c86a3a" stroke-width="3" fill="none"/>
        </svg>
        <svg class="url" viewBox="0 0 500 108"><text x="8" y="76" textLength="484" lengthAdjust="spacingAndGlyphs">www.9m8.cn</text></svg>
      </div>
    </div>`;
  }
}
